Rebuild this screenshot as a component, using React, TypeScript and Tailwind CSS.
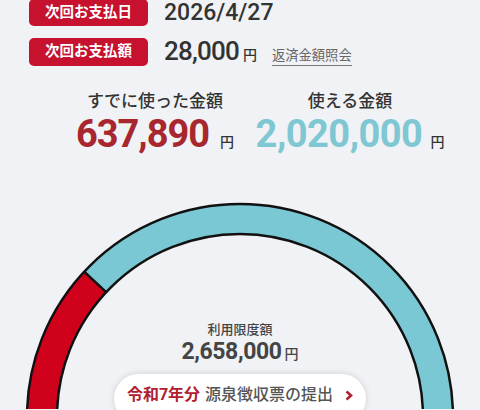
import React from "react";

const F = { fontFamily: "Roboto, 'Noto Sans CJK JP', sans-serif" };

function Gauge() {
  const cx = 240;
  const cy = 418;
  const rm = 198;
  const a1 = (137 * Math.PI) / 180;
  const a2 = (205 * Math.PI) / 180;
  const p = (r: number, a: number) => [cx + r * Math.cos(a), cy - r * Math.sin(a)];
  const [sx, sy] = p(rm, a1);
  const [ex, ey] = p(rm, a2);
  const [ox, oy] = p(213, a1);
  const [ix, iy] = p(183, a1);
  return (
    <svg className="absolute left-0 top-0" width="480" height="250" viewBox="0 160 480 250">
      <circle cx={cx} cy={cy} r={rm} fill="none" stroke="#7ac8d4" strokeWidth="29" />
      <path d={`M ${sx} ${sy} A ${rm} ${rm} 0 0 0 ${ex} ${ey}`} fill="none" stroke="#d0021b" strokeWidth="29" />
      <circle cx={cx} cy={cy} r={213} fill="none" stroke="#111" strokeWidth="2.5" />
      <circle cx={cx} cy={cy} r={183} fill="none" stroke="#111" strokeWidth="2.5" />
      <line x1={ox} y1={oy} x2={ix} y2={iy} stroke="#111" strokeWidth="2.5" />
    </svg>
  );
}

export default function App() {
  return (
    <div className="w-[480px] h-[410px] overflow-hidden bg-[#f0f2f5] text-[#333]" style={F}>
      <div className="pl-[29px] flex flex-col gap-[12px] -mt-[1px]">
        <div className="flex items-center h-[27px]">
          <div className="h-full w-[119px] rounded-[5px] bg-[#c6112f] text-white text-[14.5px] font-bold flex items-center justify-center">
            次回お支払日
          </div>
          <div className="ml-[16px] text-[23px] font-medium leading-none text-[#333]">2026/4/27</div>
        </div>
        <div className="flex items-center h-[28px]">
          <div className="h-full w-[119px] rounded-[5px] bg-[#c6112f] text-white text-[14.5px] font-bold flex items-center justify-center">
            次回お支払額
          </div>
          <div className="ml-[16px] flex items-baseline">
            <span className="text-[26px] font-medium leading-none text-[#333] tracking-[-0.8px]">28,000</span>
            <span className="ml-[4px] text-[14px] font-medium">円</span>
            <span className="ml-[15px] text-[13.3px] text-[#666] border-b-[1.5px] border-[#777] leading-[18px]">返済金額照会</span>
          </div>
        </div>
      </div>

      <div className="flex ml-[60px] gap-[5px] mt-[24px]">
        <div className="w-[190px] flex flex-col items-center">
          <div className="text-[17px] font-medium leading-[22px] text-[#333]">すでに使った金額</div>
          <div className="flex items-baseline">
            <span className="text-[38px] font-bold leading-[44px] text-[#a8262d] tracking-[-1px]">637,890</span>
            <span className="ml-[11px] text-[14px] font-medium text-[#333]">円</span>
          </div>
        </div>
        <div className="w-[190px] flex flex-col items-center">
          <div className="text-[17px] font-medium leading-[22px] text-[#333]">使える金額</div>
          <div className="flex items-baseline">
            <span className="text-[38px] font-bold leading-[44px] text-[#7fc7d3] tracking-[-0.5px]">2,020,000</span>
            <span className="ml-[8px] text-[14px] font-medium text-[#333]">円</span>
          </div>
        </div>
      </div>

      <div className="relative mt-[3px] h-[250px]">
        <Gauge />
        <div className="relative flex flex-col items-center pt-[162px]">
          <div className="text-[13px] font-medium text-[#444] leading-[18px]">利用限度額</div>
          <div className="flex items-baseline text-[#444]">
            <span className="text-[23px] font-bold leading-[26px] tracking-[-0.4px]">2,658,000</span>
            <span className="ml-[3px] text-[14px] font-medium">円</span>
          </div>
          <div className="mt-[9px] w-[252px] rounded-full bg-white shadow-[0_0_6px_rgba(0,0,0,0.15)] pt-[9px] pb-[16px] flex items-center justify-center">
            <span className="text-[16px] font-bold text-[#b0202e] leading-[24px]">令和7年分</span>
            <span className="ml-[5px] text-[16px] font-medium text-[#555] leading-[24px]">源泉徴収票の提出</span>
            <svg className="ml-[12px]" width="8" height="11" viewBox="0 0 8 11">
              <path d="M1.5 1.5 L6 5.5 L1.5 9.5" fill="none" stroke="#b0202e" strokeWidth="2.6" />
            </svg>
          </div>
        </div>
      </div>
    </div>
  );
}
